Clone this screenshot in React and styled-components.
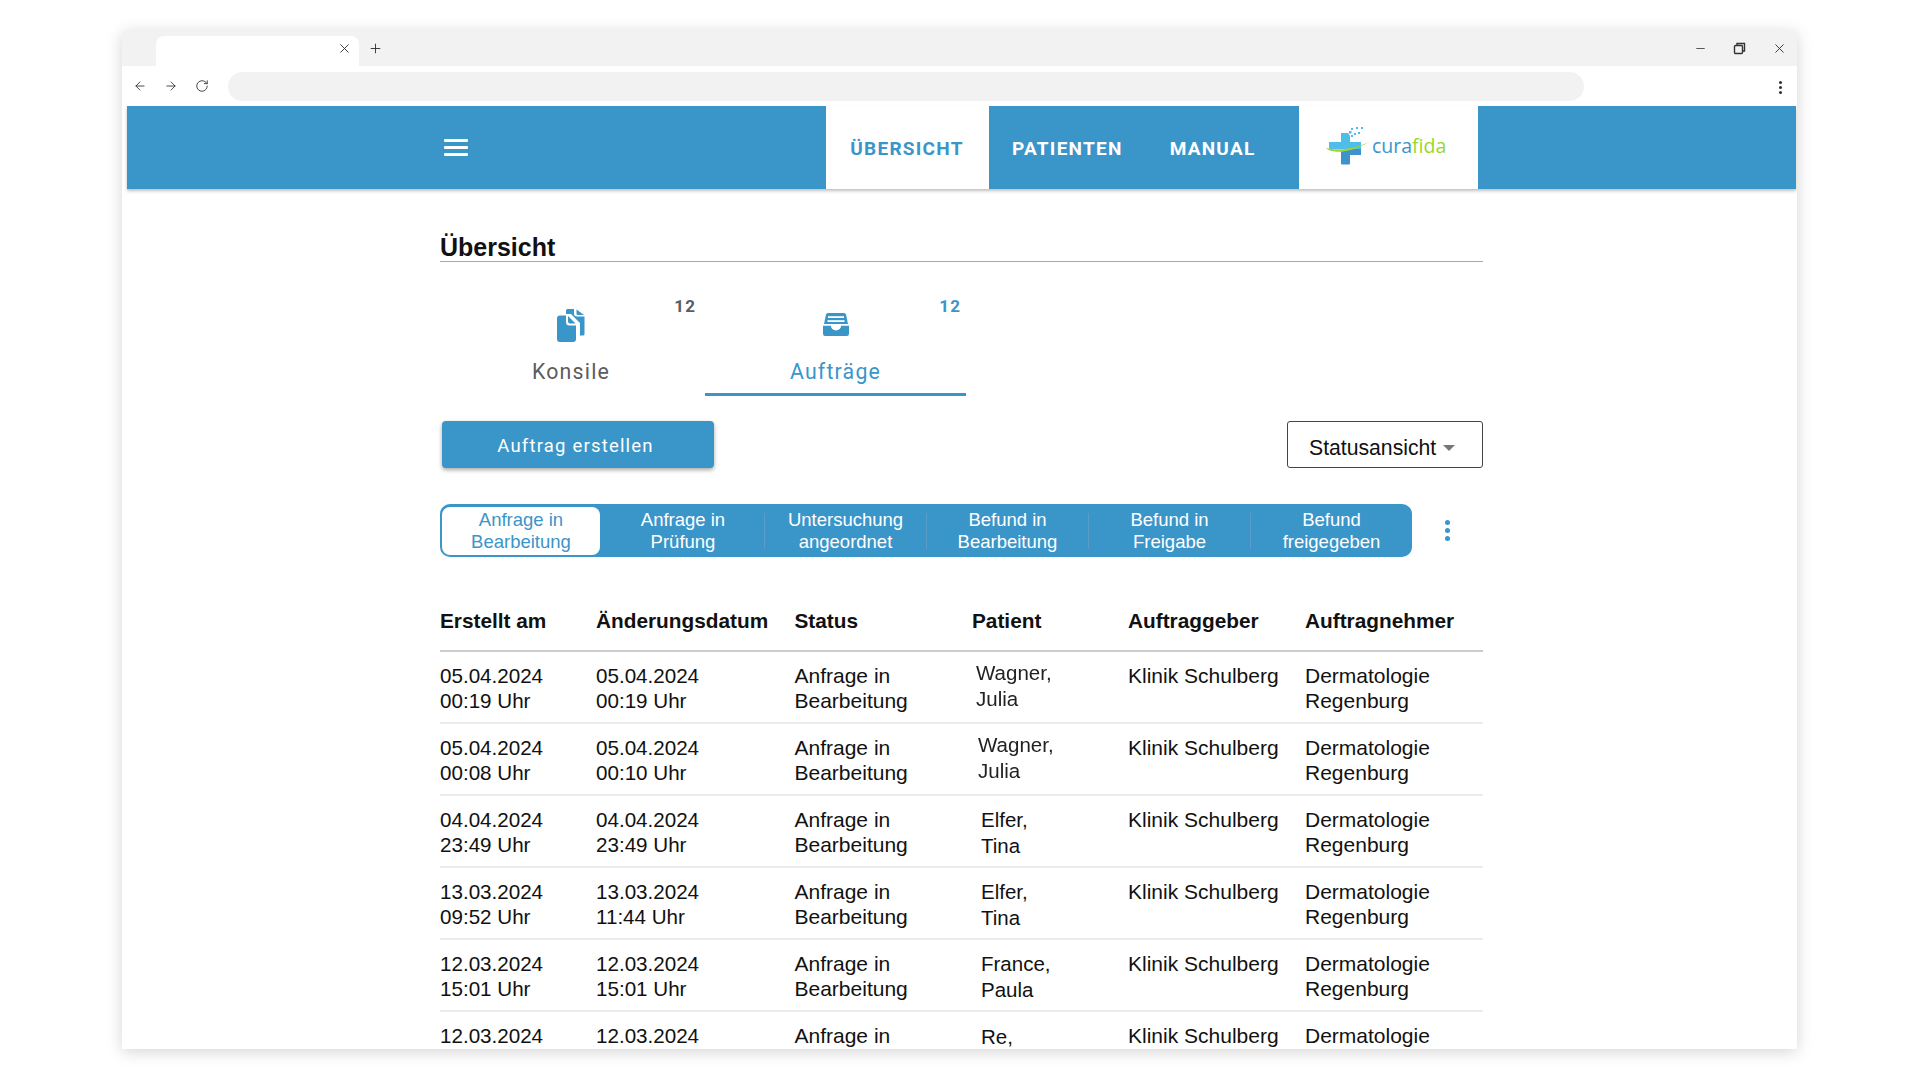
import React from 'react';
import styled, { createGlobalStyle } from 'styled-components';
import { ArrowLeft, ArrowRight, RotateCw, X, Plus, Minus } from 'lucide-react';

const BLUE = '#3a95c9';

const GlobalStyle = createGlobalStyle`
  html, body {
    margin: 0;
    width: 1920px;
    height: 1080px;
    overflow: hidden;
    background: #fff;
  }
  * { box-sizing: border-box; }
`;

const Stage = styled.div`
  width: 1920px;
  height: 1080px;
  padding: 30px 123px 31px 122px;
`;

const Window = styled.div`
  height: 1019px;
  background: #fff;
  border-radius: 4px 4px 0 0;
  overflow: hidden;
  display: flex;
  flex-direction: column;
  box-shadow: 0 3px 16px rgba(0, 0, 0, 0.17);
`;

const TabStrip = styled.div`
  height: 36px;
  flex: none;
  background: #f2f2f2;
  display: flex;
  align-items: flex-end;
  padding-left: 34px;
  color: #333;
`;

const BrowserTab = styled.div`
  width: 203px;
  height: 30px;
  background: #fff;
  border-radius: 8px 8px 0 0;
  display: flex;
  align-items: center;
  justify-content: flex-end;
  padding: 0 7px 6px 0;
`;

const NewTab = styled.div`
  margin-left: 9px;
  height: 30px;
  display: flex;
  align-items: center;
  padding-bottom: 6px;
`;

const WindowControls = styled.div`
  margin-left: auto;
  height: 36px;
  display: flex;
  align-items: center;
  gap: 26px;
  padding: 0 10px 0 0;
`;

const Toolbar = styled.div`
  height: 40px;
  flex: none;
  display: flex;
  align-items: center;
  padding: 0 11px 0 11px;
  color: #333;
`;

const ToolButtons = styled.div`
  display: flex;
  align-items: center;
  gap: 17px;
  width: 95px;
`;

const AddressBar = styled.div`
  width: 1356px;
  height: 29px;
  border-radius: 15px;
  background: #f2f2f2;
`;

const ToolDots = styled.div`
  margin-left: auto;
  display: flex;
  flex-direction: column;
  gap: 2px;
  padding-top: 2px;
  margin-right: 4px;
`;

const ToolDot = styled.span`
  width: 3px;
  height: 3px;
  border-radius: 50%;
  background: #333;
`;

const Page = styled.div`
  flex: 1;
  min-height: 0;
  padding: 0 1px 0 5px;
`;

const Nav = styled.header`
  height: 83px;
  background: ${BLUE};
  display: flex;
  box-shadow: 0 2px 3px rgba(0, 0, 0, 0.25);
`;

const MenuArea = styled.div`
  width: 699px;
  padding-left: 317px;
  display: flex;
  align-items: center;
`;

const Burger = styled.div`
  width: 24px;
  display: flex;
  flex-direction: column;
  gap: 4px;
`;

const BurgerLine = styled.span`
  height: 3px;
  border-radius: 1px;
  background: #fff;
`;

const NavGroup = styled.div`
  width: 310px;
  display: flex;
`;

const NavItem = styled.div`
  height: 83px;
  width: ${(p) => (p.$active ? '163px' : 'auto')};
  padding: 2px 24px 0 23px;
  display: flex;
  align-items: center;
  justify-content: center;
  font-family: Roboto, sans-serif;
  font-size: 19px;
  font-weight: 700;
  letter-spacing: 1.25px;
  background: ${(p) => (p.$active ? '#fff' : 'transparent')};
  color: ${(p) => (p.$active ? BLUE : '#fff')};
`;

const LogoBox = styled.div`
  width: 179px;
  height: 83px;
  background: #fff;
  display: flex;
  align-items: center;
  padding: 0 0 3px 27px;
`;

const LogoText = styled.div`
  margin-left: 2px;
  margin-top: -2px;
  font-family: 'Open Sans', sans-serif;
  font-size: 19.5px;
  color: ${BLUE};
`;

const LogoAccent = styled.span`
  color: #9bd52f;
`;

const Main = styled.main`
  width: 1043px;
  margin: 0 auto;
  padding-top: 41px;
`;

const Title = styled.h1`
  margin: 0;
  height: 32px;
  font-family: 'Liberation Sans', sans-serif;
  font-size: 25px;
  line-height: 34px;
  font-weight: 700;
  color: #111;
  border-bottom: 1px solid #7fb6d8;
`;

const TabRow = styled.div`
  display: flex;
  margin-top: 24px;
  height: 110px;
`;

const TabItem = styled.div`
  position: relative;
  width: ${(p) => p.$width}px;
  height: 110px;
  display: flex;
  flex-direction: column;
  align-items: center;
  padding: 21px ${(p) => p.$inset || 0}px 0 0;
  font-family: Roboto, sans-serif;
  font-size: 21.3px;
  letter-spacing: 1.2px;
  color: ${(p) => (p.$active ? BLUE : '#5c5c5c')};
  border-bottom: 3px solid ${(p) => (p.$active ? BLUE : 'transparent')};
`;

const TabIcon = styled.div`
  height: 36px;
  display: flex;
  align-items: center;
  justify-content: center;
`;

const TabLabel = styled.div`
  margin-top: 17px;
  line-height: 24px;
`;

const Badge = styled.span`
  position: absolute;
  top: 10px;
  right: ${(p) => p.$right}px;
  font-family: Roboto, sans-serif;
  font-size: 17px;
  font-weight: 700;
  letter-spacing: 1.1px;
  line-height: 20px;
`;

const ActionRow = styled.div`
  display: flex;
  justify-content: space-between;
  align-items: flex-start;
  margin-top: 25px;
  padding-left: 2px;
`;

const PrimaryButton = styled.div`
  width: 272px;
  height: 47px;
  border-radius: 4px;
  background: ${BLUE};
  color: #fff;
  display: flex;
  align-items: center;
  justify-content: center;
  padding: 2px 5px 0 0;
  font-family: Roboto, sans-serif;
  font-size: 18.5px;
  letter-spacing: 1.2px;
  box-shadow: 0 2px 4px rgba(0, 0, 0, 0.35);
`;

const SelectBox = styled.div`
  width: 196px;
  height: 47px;
  border: 1px solid #444;
  border-radius: 3px;
  display: flex;
  align-items: center;
  padding: 6px 0 0 21px;
  font-family: 'Liberation Sans', sans-serif;
  font-size: 21.2px;
  color: #111;
`;

const Caret = styled.span`
  width: 0;
  height: 0;
  margin-left: 7px;
  border-left: 6px solid transparent;
  border-right: 6px solid transparent;
  border-top: 6px solid #777;
`;

const SegmentRow = styled.div`
  display: flex;
  align-items: center;
  margin-top: 36px;
`;

const Segments = styled.div`
  width: 972px;
  height: 53px;
  border-radius: 10px;
  background: ${BLUE};
  display: flex;
  align-items: center;
`;

const Segment = styled.div`
  flex: 0 0 ${(p) => (p.$active ? 158 : 162)}px;
  margin: ${(p) => (p.$active ? '0 2px' : '0')};
  height: ${(p) => (p.$active ? 48 : 36)}px;
  display: flex;
  align-items: center;
  justify-content: center;
  text-align: center;
  font-family: 'Liberation Sans', sans-serif;
  font-size: 18.5px;
  line-height: 22px;
  background: ${(p) => (p.$active ? '#fff' : 'transparent')};
  color: ${(p) => (p.$active ? BLUE : '#fff')};
  border-radius: ${(p) => (p.$active ? '8px' : '0')};
  border-left: ${(p) => (p.$divider ? '1px solid #5a9ec7' : 'none')};
`;

const SegmentDots = styled.div`
  margin-left: 33px;
  display: flex;
  flex-direction: column;
  gap: 3px;
`;

const SegmentDot = styled.span`
  width: 5px;
  height: 5px;
  border-radius: 50%;
  background: ${BLUE};
`;

const Columns = styled.div`
  display: grid;
  grid-template-columns: 156px 198.5px 177.500px 156px 177px 1fr;
  font-family: 'Liberation Sans', sans-serif;
  color: #111;
`;

const HeadRow = styled(Columns)`
  margin-top: 41px;
  height: 54px;
  padding-bottom: 8px;
  border-bottom: 2px solid #ccc;
  font-size: 20.8px;
  font-weight: 700;
  line-height: 25px;
  align-items: center;
`;

const BodyRow = styled(Columns)`
  height: 72px;
  padding-top: 11px;
  border-bottom: 2px solid #ececec;
  font-size: 21px;
  line-height: 25.4px;
`;

const DateCell = styled.div`
  font-size: 20.6px;
`;

const PatientCell = styled.div`
  padding-left: ${(p) => p.$shift}px;
  margin-top: ${(p) => p.$lift}px;
  font-size: 20.5px;
  line-height: 26px;
  color: ${(p) => (p.$blur ? '#222' : '#111')};
  filter: ${(p) => (p.$blur ? 'blur(0.4px)' : 'none')};
`;

const rows = [
  ['05.04.2024', '00:19 Uhr', '05.04.2024', '00:19 Uhr', 'Wagner,', 'Julia', 4, -3, true],
  ['05.04.2024', '00:08 Uhr', '05.04.2024', '00:10 Uhr', 'Wagner,', 'Julia', 6, -3, true],
  ['04.04.2024', '23:49 Uhr', '04.04.2024', '23:49 Uhr', 'Elfer,', 'Tina', 9, 0, false],
  ['13.03.2024', '09:52 Uhr', '13.03.2024', '11:44 Uhr', 'Elfer,', 'Tina', 9, 0, false],
  ['12.03.2024', '15:01 Uhr', '12.03.2024', '15:01 Uhr', 'France,', 'Paula', 9, 0, false],
  ['12.03.2024', '14:40 Uhr', '12.03.2024', '14:40 Uhr', 'Re,', 'Anna', 9, 1, false],
];

const segments = [
  ['Anfrage in', 'Bearbeitung'],
  ['Anfrage in', 'Prüfung'],
  ['Untersuchung', 'angeordnet'],
  ['Befund in', 'Bearbeitung'],
  ['Befund in', 'Freigabe'],
  ['Befund', 'freigegeben'],
];

function RestoreIcon() {
  return (
    <svg width="13" height="13" viewBox="0 0 13 13" fill="none" stroke="#333" strokeWidth="1.4">
      <rect x="1.5" y="3.5" width="8" height="8" rx="1" />
      <path d="M4 3.5V1.5h7.5v7.5H9.5" />
    </svg>
  );
}

function FilesIcon() {
  return (
    <svg width="28" height="33" viewBox="0 0 28 33" fill={BLUE}>
      <path d="M9 5V1.500A1.500 1.500 0 0 1 10.500 0H17v4.500a3 3 0 0 0 3 3h7.500V25a1.500 1.500 0 0 1-1.500 1.500h-3V14L14 5z" />
      <path d="M19.500 .5l7.500 5.500h-6a1.500 1.500 0 0 1-1.500-1.500z" />
      <path d="M0 9.500A3 3 0 0 1 3 6.500h6V13a3.500 3.500 0 0 0 3.500 3.500H19V30a3 3 0 0 1-3 3H3a3 3 0 0 1-3-3z" />
      <path d="M11 7l7.500 7.500H13a2 2 0 0 1-2-2z" />
    </svg>
  );
}

function InboxIcon() {
  return (
    <svg width="26" height="24" viewBox="0 0 26 24">
      <path fill={BLUE} d="M5 0h16a2 2 0 0 1 2 1.600L25 11H1L3 1.600A2 2 0 0 1 5 0z" />
      <rect x="5" y="3.200" width="16" height="1.800" fill="#fff" />
      <rect x="4.500" y="7.200" width="17" height="1.800" fill="#fff" />
      <path fill={BLUE} d="M0 12.500h8a5 5 0 0 0 10 0h8V21a2 2 0 0 1-2 2H2a2 2 0 0 1-2-2z" />
      <path fill="none" stroke="#fff" strokeWidth="1.400" d="M0 11.800h8.500a4.500 4.500 0 0 0 9 0H26" />
    </svg>
  );
}

function LogoMark() {
  return (
    <svg width="44" height="38" viewBox="0 0 44 38">
      <path fill="#4fbdea" d="M15 6h7l2 3v6h11v7H4a3 3 0 0 1-1-.500V15h12z" />
      <path fill="#3f93cc" d="M15 23h9v13.500a1 1 0 0 1-1 1h-7a1 1 0 0 1-1-1z" />
      <path fill="#3f93cc" d="M24 22h11v6H24z" />
      <path fill="#9bd52f" d="M0 21c12 3 28 1 43-6-12 7-25 11-34 9.500C4 24 1 22.500 0 21z" />
      <g fill="#4fbdea">
        <rect x="25" y="1" width="2" height="2" />
        <rect x="30" y="0" width="2" height="2" />
        <rect x="35" y="0" width="2" height="2" />
        <rect x="23" y="4" width="2.500" height="2.500" />
        <rect x="28" y="6" width="2" height="2" />
        <rect x="32" y="5" width="2" height="2" />
        <rect x="25" y="8" width="2" height="2" />
      </g>
    </svg>
  );
}

export default function App() {
  return (
    <Stage>
      <GlobalStyle />
      <Window>
        <TabStrip>
          <BrowserTab>
            <X size={15} strokeWidth={1.5} />
          </BrowserTab>
          <NewTab>
            <Plus size={15} strokeWidth={1.5} />
          </NewTab>
          <WindowControls>
            <Minus size={13} strokeWidth={1.5} />
            <RestoreIcon />
            <X size={15} strokeWidth={1.5} />
          </WindowControls>
        </TabStrip>
        <Toolbar>
          <ToolButtons>
            <ArrowLeft size={14} strokeWidth={1.5} />
            <ArrowRight size={14} strokeWidth={1.5} />
            <RotateCw size={14} strokeWidth={1.5} />
          </ToolButtons>
          <AddressBar />
          <ToolDots>
            <ToolDot />
            <ToolDot />
            <ToolDot />
          </ToolDots>
        </Toolbar>
        <Page>
          <Nav>
            <MenuArea>
              <Burger>
                <BurgerLine />
                <BurgerLine />
                <BurgerLine />
              </Burger>
            </MenuArea>
            <NavItem $active>ÜBERSICHT</NavItem>
            <NavGroup>
              <NavItem>PATIENTEN</NavItem>
              <NavItem>MANUAL</NavItem>
            </NavGroup>
            <LogoBox>
              <LogoMark />
              <LogoText>
                cura<LogoAccent>fida</LogoAccent>
              </LogoText>
            </LogoBox>
          </Nav>
          <Main>
            <Title>Übersicht</Title>
            <TabRow>
              <TabItem $width={265} $inset={3}>
                <TabIcon>
                  <FilesIcon />
                </TabIcon>
                <TabLabel>Konsile</TabLabel>
                <Badge $right={9}>12</Badge>
              </TabItem>
              <TabItem $width={261} $active>
                <TabIcon>
                  <InboxIcon />
                </TabIcon>
                <TabLabel>Aufträge</TabLabel>
                <Badge $right={5}>12</Badge>
              </TabItem>
            </TabRow>
            <ActionRow>
              <PrimaryButton>Auftrag erstellen</PrimaryButton>
              <SelectBox>
                Statusansicht
                <Caret />
              </SelectBox>
            </ActionRow>
            <SegmentRow>
              <Segments>
                {segments.map((s, i) => (
                  <Segment key={i} $active={i === 0} $divider={i > 1}>
                    <div>
                      {s[0]}
                      <br />
                      {s[1]}
                    </div>
                  </Segment>
                ))}
              </Segments>
              <SegmentDots>
                <SegmentDot />
                <SegmentDot />
                <SegmentDot />
              </SegmentDots>
            </SegmentRow>
            <HeadRow>
              <div>Erstellt am</div>
              <div>Änderungsdatum</div>
              <div>Status</div>
              <div>Patient</div>
              <div>Auftraggeber</div>
              <div>Auftragnehmer</div>
            </HeadRow>
            {rows.map((r, i) => (
              <BodyRow key={i}>
                <DateCell>
                  {r[0]}
                  <br />
                  {r[1]}
                </DateCell>
                <DateCell>
                  {r[2]}
                  <br />
                  {r[3]}
                </DateCell>
                <div>
                  Anfrage in
                  <br />
                  Bearbeitung
                </div>
                <PatientCell $shift={r[6]} $lift={r[7]} $blur={r[8]}>
                  {r[4]}
                  <br />
                  {r[5]}
                </PatientCell>
                <div>Klinik Schulberg</div>
                <div>
                  Dermatologie
                  <br />
                  Regenburg
                </div>
              </BodyRow>
            ))}
          </Main>
        </Page>
      </Window>
    </Stage>
  );
}
